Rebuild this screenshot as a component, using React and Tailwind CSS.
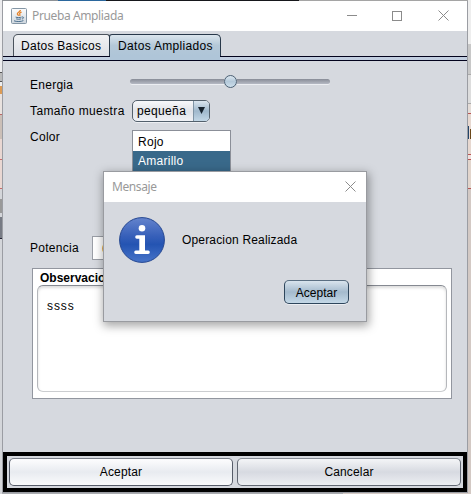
function JavaIcon() {
  return (
    <svg width="16" height="16" viewBox="0 0 16 16" className="shrink-0">
      <defs>
        <linearGradient id="jv" x1="0" y1="0" x2="0" y2="1">
          <stop offset="0" stopColor="#fdfdfd" />
          <stop offset="1" stopColor="#cdd6de" />
        </linearGradient>
      </defs>
      <rect x="0.5" y="0.5" width="15" height="15" rx="1" fill="url(#jv)" stroke="#8496a5" />
      <path d="M9.4 2C9.6 3.6 6.3 4.2 6.4 5.8c.1.8.9 1.2 1.2 2M10.6 4.2C8.9 4.7 8.2 5.5 8.8 6.3c.4.5.2 1-.2 1.5" fill="none" stroke="#e5832a" strokeWidth="1.3" />
      <path d="M4.6 9.1c1.5.6 4.6.6 6 0M5.2 10.9c1.3.5 3.7.5 5 0M3 12.8c2.3 1 7.4 1 9.4-.2M11 9c2.2-.5 2 1.6 0 2" fill="none" stroke="#4c6f8e" strokeWidth="1" />
    </svg>
  );
}

function InfoIcon() {
  return (
    <svg width="46" height="46" viewBox="0 0 46 46" className="shrink-0">
      <defs>
        <linearGradient id="inf" x1="0" y1="0" x2="0" y2="1">
          <stop offset="0" stopColor="#6584cd" />
          <stop offset="0.42" stopColor="#365fb9" />
          <stop offset="0.6" stopColor="#2454b2" />
          <stop offset="1" stopColor="#4774c9" />
        </linearGradient>
      </defs>
      <circle cx="23" cy="23" r="22.4" fill="url(#inf)" stroke="#254791" strokeWidth="1" />
      <circle cx="23" cy="11.2" r="3.3" fill="#fff" />
      <path d="M17.8 18.2H26v15.2h3.2q1.6 0 1.6 1.8t-1.6 1.8H16.8q-1.6 0-1.6-1.8t1.6-1.8h3.5V21.8h-2.5q-1.6 0-1.6-1.8t1.6-1.8Z" fill="#fff" />
    </svg>
  );
}

function CloseIcon() {
  return (
    <svg width="11" height="11" viewBox="0 0 11 11" className="shrink-0">
      <path d="M.5.5l10 10M10.5.5l-10 10" stroke="#8b8b8b" strokeWidth="1" />
    </svg>
  );
}

function TitleBar() {
  return (
    <div className="flex h-[30px] shrink-0 items-center bg-white pl-2 pr-[18px]">
      <JavaIcon />
      <span className='ml-[5px] text-[12px] leading-4 text-[#999] tracking-[-0.38px] font-["Noto_Sans",sans-serif]'>Prueba Ampliada</span>
      <div className="mb-px ml-auto flex items-center text-[#8b8b8b]">
        <div className="h-px w-[10px] bg-[#8b8b8b]" />
        <div className="ml-[35px] size-[10px] border border-[#8b8b8b]" />
        <div className="ml-[36px]"><CloseIcon /></div>
      </div>
    </div>
  );
}

function Tabs() {
  return (
    <div className="shrink-0">
      <div className="flex h-[25px] items-end pl-[10px]">
        <div className="h-[22px] w-[97px] rounded-tl-[5px] rounded-tr-[3px] border border-b-0 border-[#4b535d] bg-linear-to-b from-[#f1f2f4] to-[#dcdfe6] pl-[7px] text-[12px] leading-[22px] tracking-[0.27px] whitespace-nowrap">
          Datos Basicos
        </div>
        <div className="-ml-px h-[22px] w-[112px] rounded-tl-[3px] rounded-tr-[5px] border border-b-0 border-[#28384a] bg-linear-to-b from-[#dbe5ed] via-[#b4c8d8] to-[#afc5d8] pl-2 text-[12px] leading-[22px] tracking-[0.32px] whitespace-nowrap">
          Datos Ampliados
        </div>
      </div>
      <div className="flex h-[5px] border-y border-[#02021c] bg-[#c2cee0]">
        <div className="-mt-px ml-[107px] h-1 w-[110px] bg-[#afc5d8]" />
      </div>
    </div>
  );
}

function Slider() {
  return (
    <div className="flex h-[13px] w-[200px] items-center">
      <div className="h-[5px] w-[94px] rounded-l-full bg-linear-to-b from-[#888c97] to-[#b6bac4] shadow-[0_1px_0_#eceef2]" />
      <div className="size-[13px] shrink-0 rounded-full border border-[#4b6074] bg-linear-to-b from-[#dbe6ef] via-[#b4c9da] to-[#cddfec]" />
      <div className="h-[5px] w-[93px] rounded-r-full bg-linear-to-b from-[#888c97] to-[#b6bac4] shadow-[0_1px_0_#eceef2]" />
    </div>
  );
}

function Form() {
  return (
    <div className="flex min-h-0 flex-1 flex-col text-[12px] leading-4 tracking-[0.27px]">
      <div className="mt-[14px] flex h-[24px] items-start pl-[27px]">
        <span className="mt-[2px] w-[100px]">Energia</span>
        <Slider />
      </div>
      <div className="flex h-[23px] items-center pl-[27px]">
        <span className="w-[102px] tracking-[0.38px] whitespace-nowrap">Tamaño muestra</span>
        <div className="flex h-[22px] w-[78px] overflow-hidden rounded-[5px] border border-[#53606c] bg-linear-to-b from-[#f7f8fa] via-[#e1e4e9] to-[#eff1f5] shadow-[0_1px_0_#eceef2]">
          <span className="w-[60px] pl-1 leading-[21px] tracking-[0.35px]">pequeña</span>
          <div className="flex flex-1 items-center justify-center border-l border-[#7f94a5] bg-linear-to-b from-[#dae5ee] via-[#9fb8cc] to-[#c2d7e6]">
            <svg width="7" height="7" viewBox="0 0 7 7"><path d="M0 0h7L3.5 7Z" fill="#17232e" /></svg>
          </div>
        </div>
      </div>
      <div className="mt-[7px] flex h-[97px] pl-[27px]">
        <span className="w-[102px]">Color</span>
        <div className="mt-px h-[80px] w-[99px] border border-[#8b8f98] bg-white">
          <div className="h-5 pl-[5px] leading-[22px]">Rojo</div>
          <div className="h-5 bg-[#39698a] pl-[5px] leading-[21px] text-white">Amarillo</div>
        </div>
      </div>
      <div className="mt-[9px] flex h-[25px] items-center pl-[27px]">
        <span className="w-[62px]">Potencia</span>
        <div className="h-6 w-[120px] border border-[#9a9ea6] bg-white pl-[9px] leading-[24px] text-[#a36f3c]">0</div>
      </div>
      <div className="mt-[8px] ml-[29px] flex h-[131px] w-[420px] shrink-0 flex-col border border-[#92969f] bg-white px-1">
        <span className="h-4 shrink-0 pl-[3px] leading-[18px] font-bold tracking-normal">Observaciones</span>
        <div className="h-[107px] rounded-[6px] border border-t-[#858991] border-x-[#b5b7bb] border-b-[#cbcdd0] px-[9px] pt-[12px] tracking-[0.9px] shadow-[inset_0_2px_3px_#dddddd]">ssss</div>
      </div>
    </div>
  );
}

function Footer() {
  return (
    <div className="flex h-[40px] shrink-0 gap-1 border-4 border-black bg-[#d6d9df] px-[2px] pt-[2px] pb-[2px] text-[12px] tracking-[0.15px]">
      <button className="h-7 w-[224px] rounded-[5px] border border-[#565c69] border-t-[#7a7f89] bg-linear-to-b from-[#fdfdfe] via-[#e8ebf0] to-[#fafbfc] text-center leading-[27px]">Aceptar</button>
      <button className="h-7 w-[224px] rounded-[5px] border border-[#626873] border-t-[#888d96] bg-linear-to-b from-[#f4f5f7] via-[#d7dae1] to-[#eceef2] text-center leading-[27px]">Cancelar</button>
    </div>
  );
}

function Dialog() {
  return (
    <div className="absolute top-[171px] left-[103px] flex h-[151px] w-[264px] flex-col border border-[#999ba0] bg-[#d6d9df] shadow-[1px_3px_9px_1px_rgba(0,0,0,0.35)]">
      <div className="flex h-[30px] shrink-0 items-center justify-between bg-white pr-[10px] pl-2">
        <span className='text-[12px] leading-4 text-[#999] tracking-[-0.4px] font-["Noto_Sans",sans-serif]'>Mensaje</span>
        <div className="mb-[2px]"><CloseIcon /></div>
      </div>
      <div className="mt-[15px] flex h-[46px] items-center pl-[15px]">
        <InfoIcon />
        <span className="ml-[17px] text-[12px] leading-4 tracking-[0.17px]">Operacion Realizada</span>
      </div>
      <button className="mt-[17px] ml-[180px] h-6 w-[65px] rounded-[5px] border border-[#2e465c] border-t-[#5b6f82] bg-linear-to-b from-[#d9e4ed] via-[#a4bacd] to-[#c4d8e7] text-center text-[12px] leading-[24px] shadow-[0_1px_0_#eceef2]">Aceptar</button>
    </div>
  );
}

function LeftStrip() {
  return (
    <div className="flex h-full w-[2px] shrink-0 flex-col bg-[#d4d6da]">
      <div className="h-[72px] bg-[#ececee]" />
      <div className="h-[10px] border-y border-[#555] bg-[#bbb]" />
      <div className="h-[4px] bg-[#eee]" />
      <div className="h-[8px] bg-[#dc9b55]" />
      <div className="h-[20px] bg-[#e9e2df]" />
      <div className="h-[25px] border-t border-[#b66] bg-[#cbbfb7]" />
      <div className="h-[20px] bg-[#e9d7d2]" />
      <div className="h-[30px] border-y border-[#c66b6b] bg-[#e9d7d2]" />
      <div className="mt-[10px] h-[14px] bg-[#999]" />
      <div className="mt-[4px] h-[22px] border-b border-[#223] bg-[#777b84]" />
    </div>
  );
}

function RightStrip() {
  return (
    <div className="flex h-full w-[3px] shrink-0 flex-col bg-[#d3c9c4]">
      <div className="h-[44px] bg-[#eeeeee]" />
      <div className="h-[30px] bg-[#c8c8c8]" />
      <div className="h-[30px] border-y border-[#aaa] bg-[#dddddd]" />
      <div className="h-[9px] bg-[#e5ddd8]" />
      <div className="h-[13px] border-t border-[#b85555] bg-[#e7d8d0]" />
      <div className="flex h-[13px] gap-px bg-[#e7d8d0]">
        <div className="w-px bg-[#23456a]" />
        <div className="mt-[3px] w-px bg-[#6b481a]" />
      </div>
      <div className="h-[15px] bg-[#e7d8d0]" />
      <div className="h-[6px] border-y border-[#b85555] bg-[#f1e0dc]" />
      <div className="h-[28px] bg-[#e2d5cc]" />
      <div className="h-px bg-[#b85555]" />
    </div>
  );
}

export default function App() {
  return (
    <div className='relative flex h-[494px] w-[471px] overflow-hidden bg-[#d3c9c4] text-black font-["Liberation_Sans",Arial,sans-serif]'>
      <LeftStrip />
      <div className="flex w-[466px] shrink-0 flex-col">
        <div className="flex h-px shrink-0 bg-[#a5a5a5]">
          <div className="w-[56px] bg-[#8e9296]" />
          <div className="w-[48px] bg-[#2b679d]" />
          <div className="w-[193px] bg-[#16171b]" />
        </div>
        <div className="flex h-[492px] flex-col border border-t-0 border-[#9b9da3] bg-[#d6d9df]">
          <TitleBar />
          <Tabs />
          <Form />
          <Footer />
        </div>
        <div className="h-px w-[341px] bg-[#aaacb0]" />
      </div>
      <RightStrip />
      <Dialog />
    </div>
  );
}
